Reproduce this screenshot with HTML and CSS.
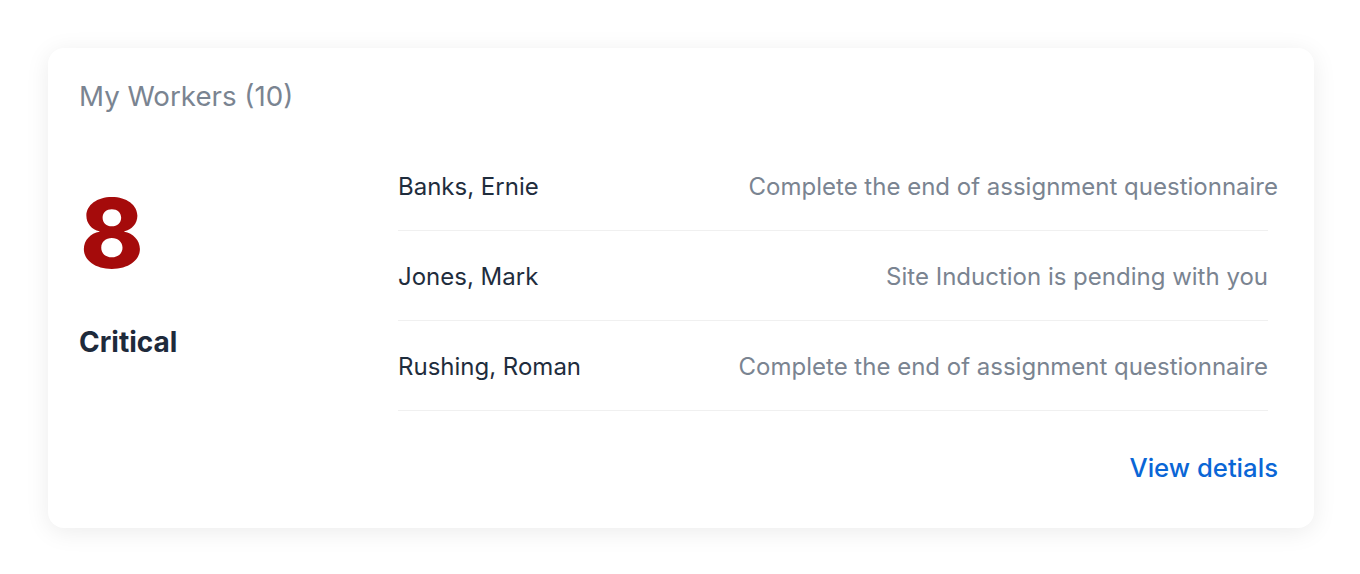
FILE: index.html
```html
<!DOCTYPE html>
<html lang="en">
<head>
<meta charset="utf-8">
<title>My Workers</title>
<link rel="stylesheet" href="styles.css">
</head>
<body>
<section class="card">
  <h2 class="card-title">My Workers (10)</h2>
  <div class="card-body">
    <div class="summary">
      <div class="count">8</div>
      <div class="label">Critical</div>
    </div>
    <ul class="list">
      <li class="row row-first">
        <span class="name">Banks, Ernie</span>
        <span class="desc">Complete the end of assignment questionnaire</span>
      </li>
      <li class="row">
        <span class="name">Jones, Mark</span>
        <span class="desc">Site Induction is pending with you</span>
      </li>
      <li class="row">
        <span class="name">Rushing, Roman</span>
        <span class="desc">Complete the end of assignment questionnaire</span>
      </li>
    </ul>
  </div>
  <div class="card-footer">
    <a class="link" href="#">View detials</a>
  </div>
</section>
</body>
</html>
```

FILE: styles.css
```css
* { box-sizing: border-box; }

html, body {
  margin: 0;
  background: #ffffff;
}

body {
  padding: 48px 46px 46px 48px;
  font-family: Inter, "Noto Sans", "Liberation Sans", sans-serif;
}

.card {
  width: 1266px;
  height: 480px;
  background: #ffffff;
  border-radius: 16px;
  box-shadow: 0 4px 24px rgba(0, 0, 0, 0.08);
  padding: 30px 36px 0 31px;
  display: flex;
  flex-direction: column;
}

.card-title {
  margin: 0;
  font-size: 27.7px;
  line-height: 36px;
  font-weight: 400;
  color: #7a8491;
}

.card-body {
  display: flex;
  margin-top: 28px;
}

.summary {
  width: 319px;
  flex: none;
  display: flex;
  flex-direction: column;
}

.count {
  font-size: 96px;
  line-height: 1;
  font-weight: 800;
  color: #a50b0b;
  margin-top: 43px;
  margin-left: 1px;
}

.label {
  margin-top: 45px;
  font-size: 28px;
  line-height: 32px;
  font-weight: 700;
  color: #1e2a3b;
}

.list {
  list-style: none;
  margin: -1px 10px 0 0;
  padding: 0;
  flex: 1;
}

.row {
  height: 90px;
  border-bottom: 1px solid #f0f0f0;
  display: flex;
  align-items: center;
  justify-content: space-between;
  font-size: 24px;
  padding-top: 2px;
}

.name {
  color: #1f2d3d;
}

.desc {
  color: #7a8491;
}

.row-first .desc {
  margin-right: -10px;
}

.card-footer {
  display: flex;
  justify-content: flex-end;
  margin-top: 41px;
}

.link {
  font-size: 25.7px;
  font-weight: 500;
  color: #0a66d6;
  text-decoration: none;
  line-height: 32px;
}
```
